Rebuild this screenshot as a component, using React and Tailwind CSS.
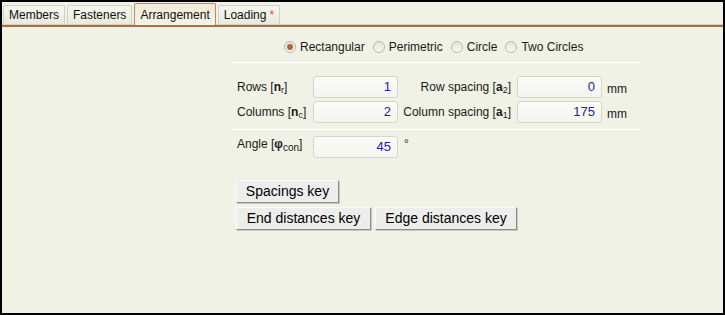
import React, { useState } from 'react';

const tabs = ['Members', 'Fasteners', 'Arrangement', 'Loading'];
const shapes = ['Rectangular', 'Perimetric', 'Circle', 'Two Circles'];

const Field = ({ value }) => (
  <div className="w-[85px] h-[22px] flex items-center justify-end pr-[6px] rounded-[3px] border border-[#d3d6cb] bg-gradient-to-b from-[#fbfbf8] to-[#f4f5ef] text-[13px] text-[#2222a0]">
    {value}
  </div>
);

const Radio = ({ label, checked, onClick }) => (
  <button type="button" onClick={onClick} className="flex items-center gap-[4px] text-[12px] text-[#1a1a1a]">
    <span className="w-[12px] h-[12px] rounded-full border border-[#b8b8b0] bg-gradient-to-b from-[#e4e4de] to-[#f8f8f4] flex items-center justify-center">
      {checked && <span className="w-[6px] h-[6px] rounded-full bg-[#a9683a]" />}
    </span>
    {label}
  </button>
);

const KeyButton = ({ children, w }) => (
  <button
    type="button"
    className={`${w} h-[23px] bg-[#ededeb] border border-t-[#fafafa] border-l-[#fafafa] border-r-[#8c8c8c] border-b-[#8c8c8c] shadow-[1px_1px_0_#c8c8c0] text-[14px] text-black font-['Liberation_Sans',Arial,sans-serif] text-center`}
  >
    {children}
  </button>
);

const App = () => {
  const [shape, setShape] = useState('Rectangular');
  const [tab, setTab] = useState('Arrangement');

  return (
    <div className="w-[725px] h-[315px] border-2 border-black bg-[#eff2e5] font-['Liberation_Sans',Arial,sans-serif] overflow-hidden">
      {/* tab strip */}
      <div className="flex items-end pl-[1px] pt-[1px] h-[23px] border-b border-[#dccfba]">
        {tabs.map((t) => {
          const active = t === tab;
          return (
            <button
              key={t}
              type="button"
              onClick={() => setTab(t)}
              className={
                active
                  ? 'h-[22px] mr-[2px] px-[5px] border border-b-0 border-[#b98a63] rounded-t-[2px] bg-gradient-to-b from-[#f5e9d6] to-[#f4f3e8] text-[12px] text-[#111] relative top-[1px]'
                  : 'h-[19px] mr-[2px] px-[5px] border border-b-0 border-[#cfd0c4] rounded-t-[2px] bg-gradient-to-b from-[#f6f6ee] to-[#e9eadf] text-[12px] text-[#111]'
              }
            >
              {t}
              {t === 'Loading' && <span className="text-[#e05050] ml-[3px] text-[12px]">*</span>}
            </button>
          );
        })}
      </div>
      <div className="h-[2px] bg-[#ab6e40]" />

      <div className="ml-[228px] w-[412px] pt-[11px] text-[12px] text-[#1a1a1a]">
        <div className="flex gap-[8px] pl-[54px] h-[18px]">
          {shapes.map((s) => (
            <Radio key={s} label={s} checked={shape === s} onClick={() => setShape(s)} />
          ))}
        </div>

        <div className="mt-[6px] h-[1px] bg-[#cfd0c6] border-b border-white" />

        <div className="mt-[13px] flex flex-col gap-[3px] pl-[7px]">
          <div className="flex items-center">
            <span className="w-[76px]">
              Rows [<b>n</b><sub className="text-[9px]">r</sub>]
            </span>
            <Field value="1" />
            <span className="w-[119px] text-right pr-[6px]">
              Row spacing [<b>a</b><sub className="text-[9px]">2</sub>]
            </span>
            <Field value="0" />
            <span className="ml-[5px] mt-[4px]">mm</span>
          </div>
          <div className="flex items-center">
            <span className="w-[76px]">
              Columns [<b>n</b><sub className="text-[9px]">c</sub>]
            </span>
            <Field value="2" />
            <span className="w-[119px] text-right pr-[6px]">
              Column spacing [<b>a</b><sub className="text-[9px]">1</sub>]
            </span>
            <Field value="175" />
            <span className="ml-[5px] mt-[4px]">mm</span>
          </div>
        </div>

        <div className="mt-[6px] h-[1px] bg-[#cfd0c6] border-b border-white" />

        <div className="mt-[6px] pl-[7px] flex items-center">
          <span className="w-[76px] -mt-[6px]">
            Angle [<b>φ</b><sub className="text-[10px]">con</sub>]
          </span>
          <Field value="45" />
          <span className="ml-[6px] -mt-[6px]">°</span>
        </div>

        <div className="mt-[22px] pl-[6px] flex flex-col gap-[4px]">
          <div className="flex">
            <KeyButton w="w-[103px]">Spacings key</KeyButton>
          </div>
          <div className="flex gap-[4px]">
            <KeyButton w="w-[135px]">End distances key</KeyButton>
            <KeyButton w="w-[142px]">Edge distances key</KeyButton>
          </div>
        </div>
      </div>
    </div>
  );
};

export default App;
